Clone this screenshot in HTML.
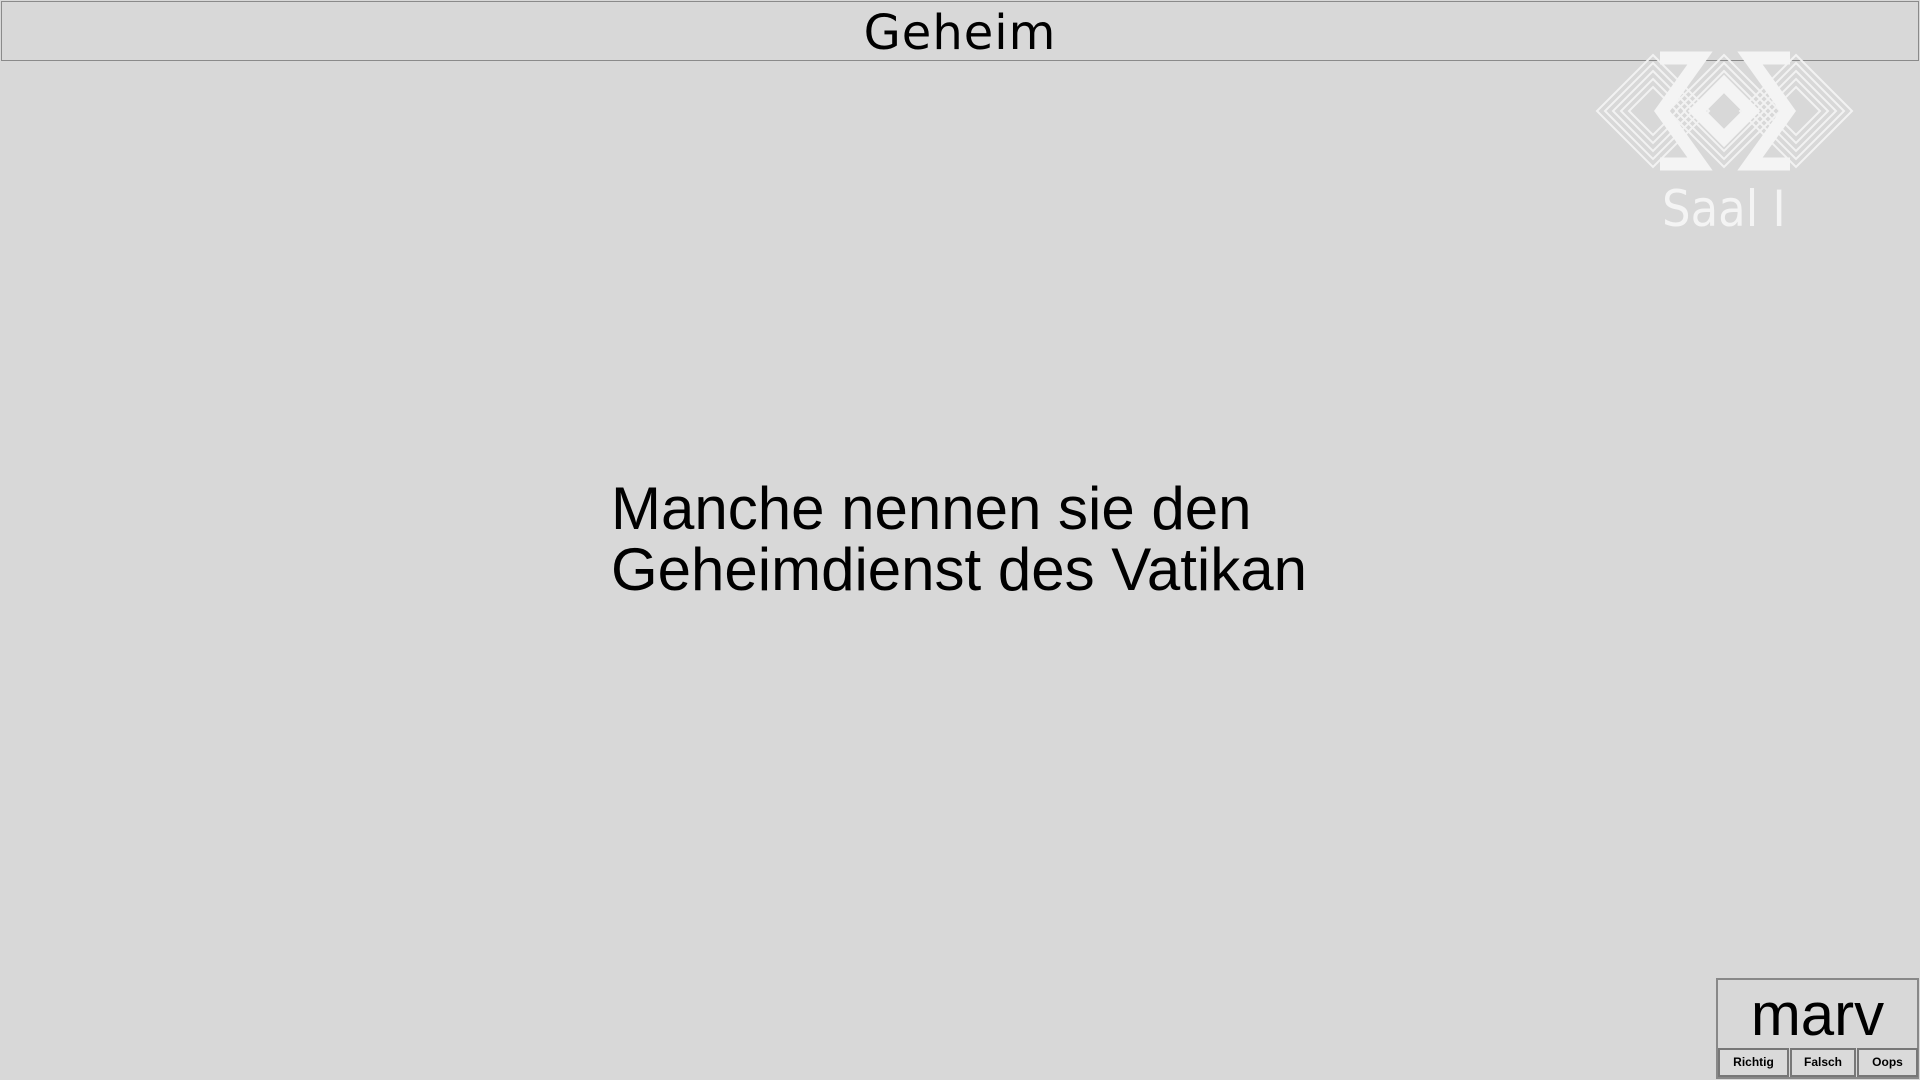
<!DOCTYPE html>
<html><head><meta charset="utf-8"><style>
body{margin:0;width:1920px;height:1080px;background:#d8d8d8;position:relative;overflow:hidden;font-family:"Liberation Sans",sans-serif}
#hdr{position:absolute;left:1px;top:1px;width:1918px;height:60px;border:1px solid #8a8a8a;box-sizing:border-box;text-align:center;font-family:"DejaVu Sans",sans-serif;font-size:48px;letter-spacing:1px;line-height:62px;color:#000}
#main{position:absolute;left:611px;top:478px;font-size:60px;line-height:61px;color:#000}
#saal{position:absolute;left:1662px;top:180px;font-family:"DejaVu Sans Condensed","DejaVu Sans",sans-serif;font-size:50px;color:#f4f4f4;letter-spacing:0px}
#box{position:absolute;left:1716px;top:978px;width:203px;height:101px;border:2px solid #888;box-sizing:border-box}
#name{position:absolute;left:0;right:0;top:2px;text-align:center;font-size:60px;line-height:66px}
.b{position:absolute;top:68px;height:29px;border:2px solid #777;box-sizing:border-box;background:#dadada;font-size:12px;font-weight:bold;text-align:center;line-height:25px}
</style></head><body>
<div id="hdr">Geheim</div>
<svg style="position:absolute;left:0;top:0" width="1920" height="240">
<g fill="none" stroke="#f2f2f2" stroke-width="2">
<path d="M1653 55 L1709 111 L1653 167 L1597 111Z M1653 63 L1701 111 L1653 159 L1605 111Z M1653 71 L1693 111 L1653 151 L1613 111Z M1653 79 L1685 111 L1653 143 L1621 111Z M1653 87 L1677 111 L1653 135 L1629 111Z"/>
<path d="M1724 55 L1780 111 L1724 167 L1668 111Z M1724 63 L1772 111 L1724 159 L1676 111Z M1724 71 L1764 111 L1724 151 L1684 111Z M1724 79 L1756 111 L1724 143 L1692 111Z M1724 87 L1748 111 L1724 135 L1700 111Z"/>
<path d="M1796 55 L1852 111 L1796 167 L1740 111Z M1796 63 L1844 111 L1796 159 L1748 111Z M1796 71 L1836 111 L1796 151 L1756 111Z M1796 79 L1828 111 L1796 143 L1764 111Z M1796 87 L1820 111 L1796 135 L1772 111Z"/>
</g>
<g fill="none" stroke="#f4f4f4" stroke-width="13">
<path d="M1660 58 L1700 58 L1662 111 L1700 164 L1660 164"/>
<path d="M1724 84 L1751 111 L1724 138 L1697 111Z"/>
<path d="M1790 58 L1750 58 L1788 111 L1750 164 L1790 164"/>
</g>
</svg>
<div id="saal">Saal I</div>
<div id="main">Manche nennen sie den<br>Geheimdienst des Vatikan</div>
<div id="box"><div id="name">marv</div>
<div class="b" style="left:0;width:71px">Richtig</div>
<div class="b" style="left:72px;width:66px">Falsch</div>
<div class="b" style="left:139px;width:61px">Oops</div>
</div>
</body></html>
